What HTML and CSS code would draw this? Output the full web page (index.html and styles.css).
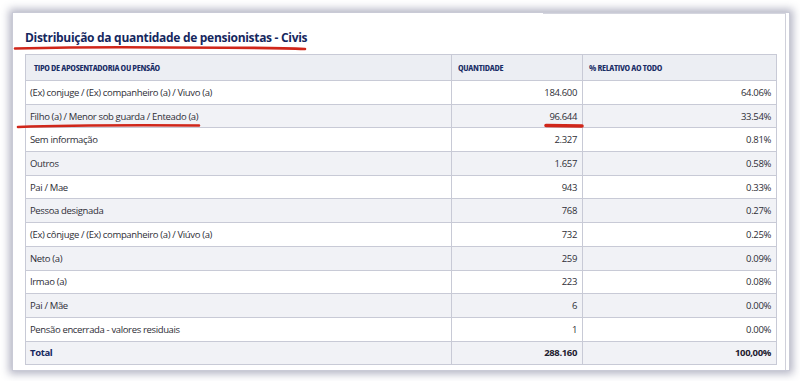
FILE: index.html
```html
<!DOCTYPE html>
<html lang="pt-BR">
<head>
<meta charset="utf-8">
<title>Distribuição da quantidade de pensionistas - Civis</title>
<link rel="stylesheet" href="styles.css">
</head>
<body>
<div class="card">
  <div class="inner">
    <div class="tab-line"></div>
    <h2 class="title">Distribuição da quantidade de pensionistas - Civis</h2>
    <table class="grid">
      <colgroup>
        <col class="c1"><col class="c2"><col class="c3">
      </colgroup>
      <thead>
        <tr><th>TIPO DE APOSENTADORIA OU PENSÃO</th><th>QUANTIDADE</th><th>% RELATIVO AO TODO</th></tr>
      </thead>
      <tbody>
        <tr><td>(Ex) conjuge / (Ex) companheiro (a) / Viuvo (a)</td><td class="num">184.600</td><td class="num">64.06%</td></tr>
        <tr><td>Filho (a) / Menor sob guarda / Enteado (a)</td><td class="num">96.644</td><td class="num">33.54%</td></tr>
        <tr><td>Sem informação</td><td class="num">2.327</td><td class="num">0.81%</td></tr>
        <tr><td>Outros</td><td class="num">1.657</td><td class="num">0.58%</td></tr>
        <tr><td>Pai / Mae</td><td class="num">943</td><td class="num">0.33%</td></tr>
        <tr><td>Pessoa designada</td><td class="num">768</td><td class="num">0.27%</td></tr>
        <tr><td>(Ex) cônjuge / (Ex) companheiro (a) / Viúvo (a)</td><td class="num">732</td><td class="num">0.25%</td></tr>
        <tr><td>Neto (a)</td><td class="num">259</td><td class="num">0.09%</td></tr>
        <tr><td>Irmao (a)</td><td class="num">223</td><td class="num">0.08%</td></tr>
        <tr><td>Pai / Mãe</td><td class="num">6</td><td class="num">0.00%</td></tr>
        <tr><td>Pensão encerrada - valores residuais</td><td class="num">1</td><td class="num">0.00%</td></tr>
        <tr class="total"><td>Total</td><td class="num">288.160</td><td class="num">100,00%</td></tr>
      </tbody>
    </table>
  </div>
  <svg class="marks" width="800" height="381" viewBox="0 0 800 381">
    <path d="M15 48.5 C 60 47.5, 120 47, 165 47.5 C 220 47.5, 270 47.5, 305 49" />
    <path d="M18 127 C 60 125.5, 120 125, 199 125.5" />
    <path d="M546 125.5 L 582 126" class="thick"/>
  </svg>
</div>
</body>
</html>
```

FILE: styles.css
```css
html, body {
  margin: 0;
  padding: 0;
  background: #ffffff;
}
body {
  width: 800px;
  height: 381px;
  overflow: hidden;
  padding: 12px 10px 10px 12px;
  box-sizing: border-box;
}
.card {
  width: 778px;
  height: 359px;
  box-sizing: border-box;
  background: #fff;
  border: 1px solid #c9cad6;
  box-shadow: 0 0 8px 3px rgba(70, 72, 110, 0.4);
  display: flex;
}
.inner {
  flex: 1;
  margin-right: 3px;
  border-right: 1px solid #cfd0da;
  padding: 0 0 0 12px;
  display: flex;
  flex-direction: column;
}
.tab-line {
  align-self: flex-end;
  width: 243px;
  height: 0;
  border-top: 1px solid #d4d5de;
  margin-right: -1px;
}
.title {
  margin: 14px 0 0 0;
  font-family: "Open Sans", "Noto Sans", sans-serif;
  font-weight: 700;
  font-size: 12px;
  line-height: 20px;
  color: #15275e;
  letter-spacing: -0.3px;
  height: 26px;
}
.grid {
  width: 751px;
  border-collapse: collapse;
  table-layout: fixed;
  font-family: "Open Sans", "Noto Sans", sans-serif;
  font-size: 9.5px;
  color: #2e2e36;
}
.c1 { width: 426px; }
.c2 { width: 131px; }
.c3 { width: 194px; }
.grid th, .grid td {
  border: 1px solid #c8cad6;
  padding: 0 5px 0 4px;
  white-space: nowrap;
  overflow: hidden;
}
.grid th {
  height: 25px;
  background: #eceef3;
  text-align: left;
  font-family: "Open Sans", "DejaVu Sans", sans-serif;
  font-stretch: 75%;
  font-weight: 700;
  font-size: 9.5px;
  color: #1a2d66;
  letter-spacing: -0.3px;
  padding-left: 6px;
}
.grid th:first-child {
  padding-left: 8px;
}
.grid td {
  height: 22.7px;
  letter-spacing: -0.35px;
}
.grid tbody tr:nth-child(even) td {
  background: #f1f2f6;
}
.grid td.num {
  text-align: right;
}
.grid tr.total td {
  font-weight: 700;
  color: #1e2030;
}
.grid tr.total td:first-child {
  color: #15275e;
}
.marks {
  position: absolute;
  left: 0;
  top: 0;
  pointer-events: none;
}
.marks path {
  fill: none;
  stroke: #d0261a;
  stroke-width: 2.6;
  stroke-linecap: round;
}
.marks path.thick {
  stroke-width: 3.6;
}
```
